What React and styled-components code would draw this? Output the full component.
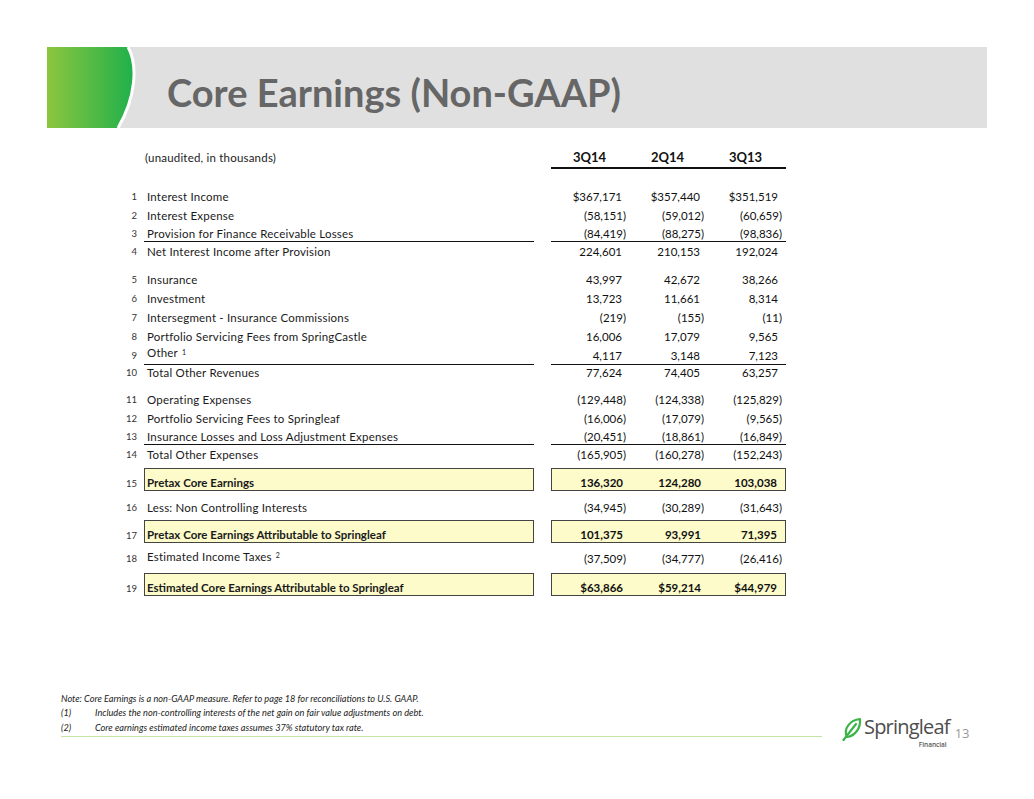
import styled, { createGlobalStyle } from "styled-components";

const GlobalStyle = createGlobalStyle`
  html, body {
    margin: 0;
    padding: 0;
    background: #fff;
  }
  body {
    font-family: Lato, "Liberation Sans", sans-serif;
    color: #1a1a1a;
  }
`;

const rows = [
    { n: 1, label: "Interest Income", values: ["$367,171", "$357,440", "$351,519"], top: 18 },
    { n: 2, label: "Interest Expense", values: ["(58,151)", "(59,012)", "(60,659)"] },
    { n: 3, label: "Provision for Finance Receivable Losses", values: ["(84,419)", "(88,275)", "(98,836)"], rule: true },
    { n: 4, label: "Net Interest Income after Provision", values: ["224,601", "210,153", "192,024"] },
    { n: 5, label: "Insurance", values: ["43,997", "42,672", "38,266"], top: 9 },
    { n: 6, label: "Investment", values: ["13,723", "11,661", "8,314"] },
    { n: 7, label: "Intersegment - Insurance Commissions", values: ["(219)", "(155)", "(11)"] },
    { n: 8, label: "Portfolio Servicing Fees from SpringCastle", values: ["16,006", "17,079", "9,565"] },
    { n: 9, label: "Other", note: "1", values: ["4,117", "3,148", "7,123"], rule: true },
    { n: 10, label: "Total Other Revenues", values: ["77,624", "74,405", "63,257"] },
    { n: 11, label: "Operating Expenses", values: ["(129,448)", "(124,338)", "(125,829)"], top: 8 },
    { n: 12, label: "Portfolio Servicing Fees to Springleaf", values: ["(16,006)", "(17,079)", "(9,565)"] },
    { n: 13, label: "Insurance Losses and Loss Adjustment Expenses", values: ["(20,451)", "(18,861)", "(16,849)"], rule: true },
    { n: 14, label: "Total Other Expenses", values: ["(165,905)", "(160,278)", "(152,243)"] },
    { n: 15, label: "Pretax Core Earnings", values: ["136,320", "124,280", "103,038"], total: true, top: 4 },
    { n: 16, label: "Less: Non Controlling Interests", values: ["(34,945)", "(30,289)", "(31,643)"], top: 7 },
    { n: 17, label: "Pretax Core Earnings Attributable to Springleaf", values: ["101,375", "93,991", "71,395"], total: true, top: 3 },
    { n: 18, label: "Estimated Income Taxes", note: "2", values: ["(37,509)", "(34,777)", "(26,416)"], top: 6 },
    { n: 19, label: "Estimated Core Earnings Attributable to Springleaf", values: ["$63,866", "$59,214", "$44,979"], total: true, top: 5 },
];

const LeafMark = () => (
    <svg width="20" height="24" viewBox="0 0 20 24">
        <path
            d="M5 20 C 1 12, 8 3, 18 2 C 19 11, 13 19, 5 20 Z"
            fill="none"
            stroke="#3cb44a"
            strokeWidth="2.2"
            strokeLinejoin="round"
        />
        <path d="M1.5 23 L 14 7" stroke="#3cb44a" strokeWidth="2.2" strokeLinecap="round" />
    </svg>
);

const GreenTab = () => (
    <svg width="92" height="81" viewBox="0 0 92 81">
        <defs>
            <linearGradient id="tab" x1="0" y1="0" x2="1" y2="0">
                <stop offset="0" stopColor="#8cc63e" />
                <stop offset="1" stopColor="#1fb04b" />
            </linearGradient>
        </defs>
        <path d="M0 0 H81 C 91 18, 89 50, 71 81 H0 Z" fill="url(#tab)" />
        <path d="M81 0 C 91 18, 89 50, 71 81" fill="none" stroke="#fff" strokeWidth="3" />
    </svg>
);

const CoreEarnings = () => {
    return (
        <Page>
            <GlobalStyle />
            <Banner>
                <GreenTab />
                <Title>Core Earnings (Non-GAAP)</Title>
            </Banner>

            <Table>
                <HeaderRow>
                    <span />
                    <Caption>(unaudited, in thousands)</Caption>
                    <span />
                    <HeaderValues>
                        <HeaderCell>3Q14</HeaderCell>
                        <HeaderCell>2Q14</HeaderCell>
                        <HeaderCell>3Q13</HeaderCell>
                    </HeaderValues>
                </HeaderRow>

                {rows.map((row) => (
                    <Row key={row.n} $top={row.top} $rule={row.rule} $total={row.total}>
                        <LineNo $total={row.total}>{row.n}</LineNo>
                        <Label $rule={row.rule} $total={row.total} $lift={!!row.note}>
                            {row.label}
                            {row.note && <Sup>{row.note}</Sup>}
                        </Label>
                        <span />
                        <Values $rule={row.rule} $total={row.total}>
                            {row.values.map((v, i) => (
                                <Value key={i} $neg={v.endsWith(")")}>
                                    {v}
                                </Value>
                            ))}
                        </Values>
                    </Row>
                ))}
            </Table>

            <Footer>
                <Notes>
                    <NoteLine>Note: Core Earnings is a non-GAAP measure. Refer to page 18 for reconciliations to U.S. GAAP.</NoteLine>
                    <NoteLine>
                        <Marker>(1)</Marker>
                        Includes the non-controlling interests of the net gain on fair value adjustments on debt.
                    </NoteLine>
                    <NoteLine>
                        <Marker>(2)</Marker>
                        Core earnings estimated income taxes assumes 37% statutory tax rate.
                    </NoteLine>
                </Notes>
                <Logo>
                    <LeafMark />
                    <Wordmark>
                        <Brand>Springleaf</Brand>
                        <SubBrand>Financial</SubBrand>
                    </Wordmark>
                </Logo>
                <PageNumber>13</PageNumber>
            </Footer>
        </Page>
    );
};

const Page = styled.div`
    width: 1034px;
    height: 799px;
    display: flex;
    flex-direction: column;
    box-sizing: border-box;
    padding-bottom: 51px;
    overflow: hidden;
`;
const Banner = styled.header`
    margin: 47px 47px 0;
    height: 81px;
    background: #e0e0e0;
    display: flex;
    align-items: center;
`;
const Title = styled.h1`
    margin: 0 0 0 28px;
    padding-top: 8px;
    font-family: Lato, "Open Sans", sans-serif;
    font-size: 38px;
    font-weight: 700;
    color: #666;
`;
const Table = styled.section`
    margin: 19px 0 0 104px;
    display: flex;
    flex-direction: column;
`;
const grid = `
    display: grid;
    grid-template-columns: 40px 390px 17px 235px;
    box-sizing: border-box;
`;
const HeaderRow = styled.div`
    ${grid}
    height: 22px;
`;
const Caption = styled.div`
    display: flex;
    align-items: center;
    padding-left: 1px;
    padding-bottom: 2px;
    font-size: 11.5px;
    letter-spacing: 0.2px;
`;
const HeaderValues = styled.div`
    display: grid;
    grid-template-columns: 79px 78px 1fr;
    border-bottom: 2px solid #111;
`;
const HeaderCell = styled.div`
    display: flex;
    align-items: center;
    justify-content: flex-end;
    padding-right: 24px;
    font-size: 13px;
    font-weight: 700;
    color: #111;
`;
const Row = styled.div`
    ${grid}
    margin-top: ${(p) => p.$top || 0}px;
    height: ${(p) => (p.$total ? 23 : p.$rule ? 17 : 19)}px;
`;
const LineNo = styled.div`
    display: flex;
    align-items: center;
    justify-content: flex-end;
    padding-right: 7px;
    padding-top: ${(p) => (p.$total ? 7 : 0)}px;
    font-size: 9.5px;
    color: #333;
`;
const boxed = `
    border: 1px solid #444;
    background: #fdfbca;
    font-weight: 700;
    padding-top: 6px;
`;
const Label = styled.div`
    display: flex;
    align-items: center;
    box-sizing: border-box;
    padding-left: 3px;
    padding-bottom: ${(p) => (p.$lift ? 5 : 0)}px;
    font-size: 11.5px;
    letter-spacing: 0.2px;
    white-space: nowrap;
    border-bottom: ${(p) => (p.$rule ? "1px solid #111" : "none")};
    ${(p) => (p.$total ? boxed : "")}
    ${(p) => (p.$total ? "padding-left: 2px; letter-spacing: 0;" : "")}
`;
const Sup = styled.sup`
    font-size: 7px;
    margin-left: 4px;
    align-self: flex-start;
    margin-top: 2px;
`;
const Values = styled.div`
    display: grid;
    grid-template-columns: 79px 78px 1fr;
    box-sizing: border-box;
    border-bottom: ${(p) => (p.$rule ? "1px solid #111" : "none")};
    ${(p) => (p.$total ? boxed : "")}
`;
const Value = styled.div`
    display: flex;
    align-items: center;
    justify-content: flex-end;
    padding-right: ${(p) => (p.$neg ? 4 : 8)}px;
    font-size: 11.5px;
    color: #111;
`;
const Footer = styled.footer`
    margin-top: auto;
    display: flex;
    align-items: flex-end;
    padding-left: 61px;
`;
const Notes = styled.div`
    width: 761px;
    padding-bottom: 1px;
    margin-bottom: 11px;
    border-bottom: 1px solid #c6e2a6;
`;
const NoteLine = styled.div`
    display: flex;
    font-size: 9.2px;
    font-style: italic;
    line-height: 14.5px;
    color: #222;
`;
const Marker = styled.span`
    width: 34px;
`;
const Logo = styled.div`
    display: flex;
    align-items: flex-start;
    margin-left: 20px;
    gap: 2px;
`;
const Wordmark = styled.div`
    display: flex;
    flex-direction: column;
    align-items: flex-end;
`;
const Brand = styled.div`
    font-family: "Open Sans", sans-serif;
    font-size: 20px;
    line-height: 20px;
    letter-spacing: -0.8px;
    color: #4d4d4d;
`;
const SubBrand = styled.div`
    margin: 4px 3px 0 0;
    font-family: "Open Sans", sans-serif;
    font-size: 6.5px;
    font-weight: 600;
    line-height: 7px;
    color: #555;
`;
const PageNumber = styled.div`
    align-self: flex-end;
    margin: 0 0 6px 5px;
    font-family: "Open Sans", sans-serif;
    font-size: 13px;
    color: #9a9a9a;
`;

export default CoreEarnings;
